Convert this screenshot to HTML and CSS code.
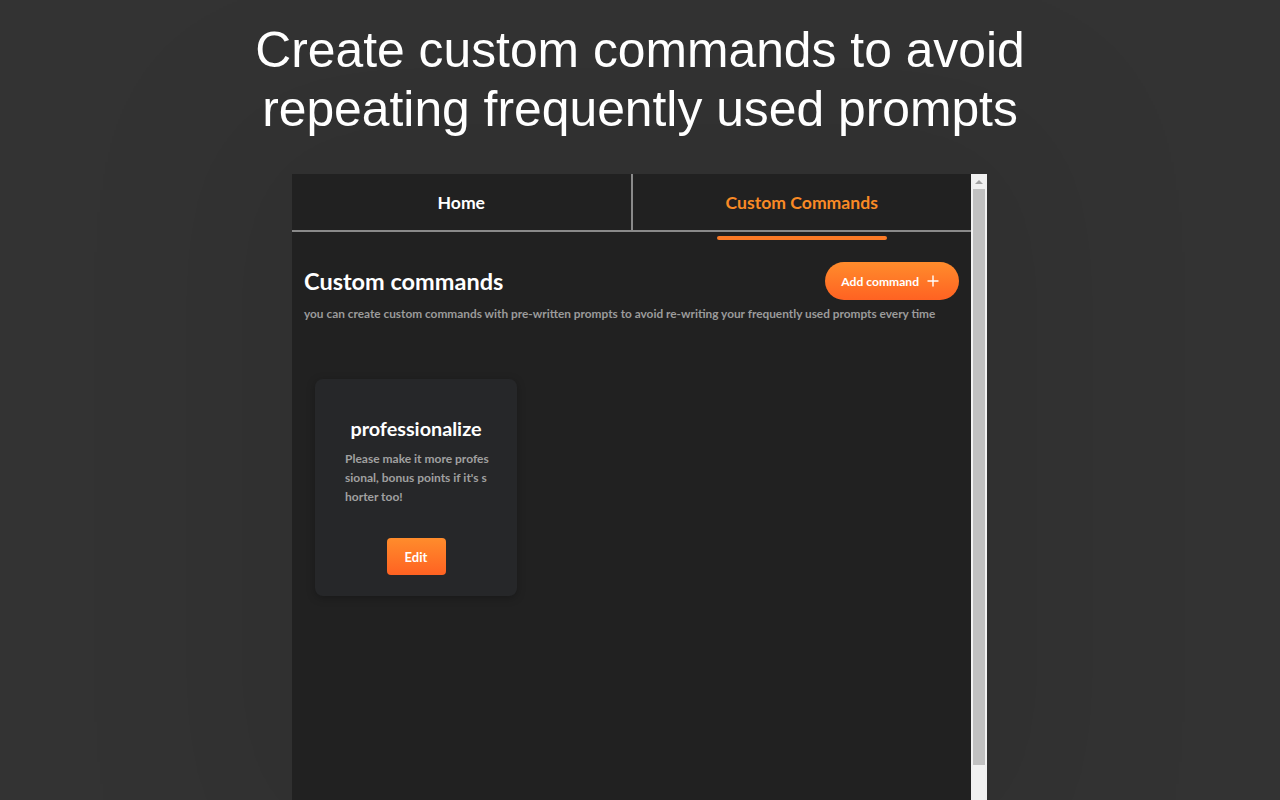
FILE: index.html
```html
<!DOCTYPE html>
<html lang="en">
<head>
    <title>Custom Commands</title>
    <link rel="stylesheet" href="styles.css">
</head>
<body>

    <h1 class="headline">Create custom commands to avoid<br>repeating frequently used prompts</h1>

    <div class="window">
        <div class="popup">
            <nav class="tabs">
                <div class="tab">Home</div>
                <div class="tab active">Custom Commands</div>
            </nav>
            <div class="tab-marker"><span></span></div>

            <section class="content">
                <div class="title-row">
                    <h2>Custom commands</h2>
                    <button class="add-btn">Add command
                        <svg width="12" height="12" viewBox="0 0 12 12"><path d="M6 1v10M1 6h10" stroke="#fff" stroke-width="1.4" stroke-linecap="round"/></svg>
                    </button>
                </div>
                <p class="subtitle">you can create custom commands with pre-written prompts to avoid re-writing your frequently used prompts every time</p>

                <div class="cards">
                    <div class="card">
                        <h3>professionalize</h3>
                        <p>Please make it more professional, bonus points if it's shorter too!</p>
                        <button class="edit-btn">Edit</button>
                    </div>
                </div>
            </section>
        </div>
        <div class="scrollbar">
            <div class="arrow"></div>
            <div class="thumb"></div>
        </div>
    </div>

</body>
</html>
```

FILE: styles.css
```css
body {
    margin: 0;
    height: 800px;
    overflow: hidden;
    background: #333333;
    font-family: "Lato", "Noto Sans", sans-serif;
}
.headline {
    margin: 0;
    padding-top: 21px;
    height: 174px;
    box-sizing: border-box;
    font-family: "Liberation Sans", Arial, sans-serif;
    font-weight: normal;
    font-size: 49.8px;
    line-height: 59px;
    color: #ffffff;
    text-align: center;
}
.window {
    display: flex;
    width: 695px;
    height: 626px;
    margin: 0 0 0 292px;
    box-shadow: 0 0 160px 60px rgba(0, 0, 0, 0.08);
}
.popup {
    flex: 1;
    background: #212121;
}
.tabs {
    display: flex;
    height: 56px;
    border-bottom: 2px solid #8a8a8a;
}
.tab {
    flex: 1;
    display: flex;
    align-items: center;
    justify-content: center;
    font-size: 17.6px;
    font-weight: bold;
    color: #ffffff;
}
.tab + .tab {
    border-left: 2px solid #8a8a8a;
}
.tab.active {
    color: #f98a25;
}
.tab-marker {
    display: flex;
    justify-content: flex-end;
    padding: 4px 84px 0 0;
}
.tab-marker span {
    width: 170px;
    height: 4px;
    border-radius: 2px;
    background: #fb7a26;
}
.content {
    padding: 22px 12px 0 12px;
}
.title-row {
    display: flex;
    justify-content: space-between;
    align-items: center;
}
h2 {
    margin: 0;
    font-size: 23.5px;
    color: #ffffff;
}
.add-btn {
    display: flex;
    align-items: center;
    gap: 8px;
    height: 38px;
    padding: 0 20px 0 16px;
    border: none;
    border-radius: 19px;
    background: linear-gradient(#ff8c2c, #ff6222);
    color: #ffffff;
    font-family: inherit;
    font-size: 12.1px;
    font-weight: bold;
}
.subtitle {
    margin: 6px 0 0 0;
    font-size: 11.85px;
    font-weight: bold;
    color: #9b9b9b;
}
.cards {
    display: flex;
    padding: 58px 0 0 11px;
}
.card {
    width: 202px;
    height: 217px;
    box-sizing: border-box;
    padding: 37px 26px 0 30px;
    background: #262729;
    border-radius: 8px;
    box-shadow: 0 2px 8px rgba(0, 0, 0, 0.25);
    text-align: center;
}
.card h3 {
    margin: 0;
    padding-right: 4px;
    font-size: 19.8px;
    color: #ffffff;
}
.card p {
    margin: 9px 0 0 0;
    text-align: left;
    font-size: 12px;
    font-weight: bold;
    line-height: 19px;
    color: #a0a0a0;
    word-break: break-all;
}
.edit-btn {
    margin: 32px 4px 0 0;
    width: 59px;
    height: 37px;
    border: none;
    border-radius: 4px;
    background: linear-gradient(#ff8c2c, #ff6222);
    color: #ffffff;
    font-family: inherit;
    font-size: 13px;
    font-weight: bold;
}
.scrollbar {
    width: 16px;
    background: #f1f1f1;
    display: flex;
    flex-direction: column;
    align-items: center;
}
.arrow {
    margin-top: 6px;
    width: 0;
    height: 0;
    border-left: 4px solid transparent;
    border-right: 4px solid transparent;
    border-bottom: 4px solid #a3a3a3;
}
.thumb {
    margin-top: 5px;
    width: 12px;
    height: 576px;
    background: #c1c1c1;
}
```
